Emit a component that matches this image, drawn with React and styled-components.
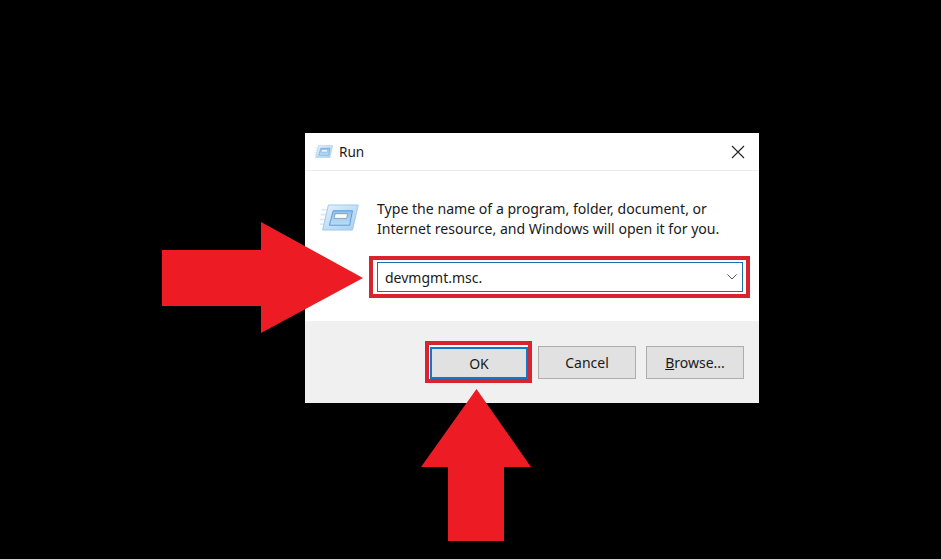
import React from 'react';
import styled, { createGlobalStyle } from 'styled-components';

const GlobalStyle = createGlobalStyle`
  html, body {
    margin: 0;
    padding: 0;
    background: #000;
  }
`;

const Stage = styled.div`
  position: relative;
  box-sizing: border-box;
  width: 941px;
  height: 559px;
  padding: 133px 0 0 305px;
  overflow: hidden;
  background: #000;
  font-family: "Noto Sans", "Open Sans", sans-serif;
  color: #1a1a1a;
`;

const Dialog = styled.div`
  display: flex;
  flex-direction: column;
  width: 454px;
  height: 270px;
  background: #fff;
`;

const TitleBar = styled.div`
  box-sizing: border-box;
  display: flex;
  align-items: center;
  height: 38px;
  padding: 0 14px 0 9px;
  border-bottom: 1px solid #ececec;
`;

const Title = styled.span`
  flex: 1;
  margin-left: 6px;
  font-size: 13.6px;
`;

const Content = styled.div`
  flex: 1;
  box-sizing: border-box;
  padding: 28px 9px 0 72px;
  position: relative;
`;

const Message = styled.p`
  margin: 0;
  font-size: 14.1px;
  line-height: 20px;
  white-space: nowrap;
`;

const Highlight = styled.div`
  box-sizing: border-box;
  display: flex;
  border: 4px solid #d9232e;
  background: #fff;
  padding: ${p => p.$padding};
`;

const InputRow = styled(Highlight)`
  width: 381px;
  height: 42px;
  margin: 17px 0 0 -8px;
`;

const ComboBox = styled.div`
  flex: 1;
  box-sizing: border-box;
  display: flex;
  align-items: center;
  justify-content: space-between;
  padding: 0 5px 0 7px;
  border: 1px solid #1b6fa8;
  font-size: 14px;
`;

const Footer = styled.div`
  box-sizing: border-box;
  display: flex;
  align-items: center;
  gap: 10px;
  height: 82px;
  padding: 0 15px 0 120px;
  background: #f0f0f0;
`;

const OkHighlight = styled(Highlight)`
  width: 107px;
  height: 42px;
  margin-right: -4px;
`;

const Button = styled.div`
  box-sizing: border-box;
  display: flex;
  align-items: center;
  justify-content: center;
  width: 98px;
  height: 33px;
  flex: ${p => (p.$primary ? '1' : 'none')};
  background: #e1e1e1;
  border: ${p => (p.$primary ? '2px solid #0f78c8' : '1px solid #adadad')};
  font-size: 14px;
`;

const PrimaryButton = styled(Button)`
  height: 32px;
`;

const Overlay = styled.svg`
  position: absolute;
  top: 0;
  left: 0;
  pointer-events: none;
`;

const IconSlot = styled.svg`
  flex: none;
`;

const BodyIcon = styled.svg`
  position: absolute;
  top: 33px;
  left: 14px;
`;

const Underlined = styled.span`
  text-decoration: underline;
`;

function RunIcon({ as: Comp = IconSlot, width, height }) {
  return (
    <Comp width={width} height={height} viewBox="0 0 40 28">
      <defs>
        <linearGradient id={`g${width}`} x1="0" y1="0" x2="1" y2="1">
          <stop offset="0" stopColor="#e4f1fb" />
          <stop offset="1" stopColor="#a5cdef" />
        </linearGradient>
        <linearGradient id={`p${width}`} x1="0" y1="0" x2="0" y2="1">
          <stop offset="0" stopColor="#8cc2ee" />
          <stop offset="1" stopColor="#bcdcf5" />
        </linearGradient>
      </defs>
      <path d="M2 6h9M1 11h8M0 16h7M0 21h5" stroke="#d8e8f5" strokeWidth="1.6" />
      <path d="M9 1h31l-6 26H3z" fill={`url(#g${width})`} stroke="#9cc8ec" strokeWidth="1" />
      <path d="M14 7h20l-3 15H10z" fill={`url(#p${width})`} stroke="#5a9bd4" strokeWidth="1" />
      <path d="M16 10h13l-1 5H15z" fill="#f7fbfe" stroke="#7a94aa" strokeWidth="0.8" />
    </Comp>
  );
}

export default function App() {
  return (
    <Stage>
      <GlobalStyle />
      <Dialog>
        <TitleBar>
          <RunIcon width={19} height={13} />
          <Title>Run</Title>
          <IconSlot width={14} height={14} viewBox="0 0 14 14">
            <path d="M1 1l12 12M13 1L1 13" stroke="#222" strokeWidth="1.1" fill="none" />
          </IconSlot>
        </TitleBar>
        <Content>
          <RunIcon as={BodyIcon} width={40} height={27} />
          <Message>Type the name of a program, folder, document, or</Message>
          <Message>Internet resource, and Windows will open it for you.</Message>
          <InputRow $padding="2px 3px 2px 4px">
            <ComboBox>
              devmgmt.msc.
              <IconSlot width={10} height={6} viewBox="0 0 10 6">
                <path d="M.5.5L5 5 9.5.5" stroke="#555" strokeWidth="1" fill="none" />
              </IconSlot>
            </ComboBox>
          </InputRow>
        </Content>
        <Footer>
          <OkHighlight $padding="2px 0 0 1px">
            <PrimaryButton $primary>OK</PrimaryButton>
          </OkHighlight>
          <Button>Cancel</Button>
          <Button>
            <span><Underlined>B</Underlined>rowse...</span>
          </Button>
        </Footer>
      </Dialog>
      <Overlay width={941} height={559} viewBox="0 0 941 559">
        <polygon points="162,250 261,250 261,222 363,278 261,333 261,306 162,306" fill="#ed1c24" />
        <polygon points="476.5,389 531,467 504,467 504,541 448,541 448,467 421,467" fill="#ed1c24" />
      </Overlay>
    </Stage>
  );
}
